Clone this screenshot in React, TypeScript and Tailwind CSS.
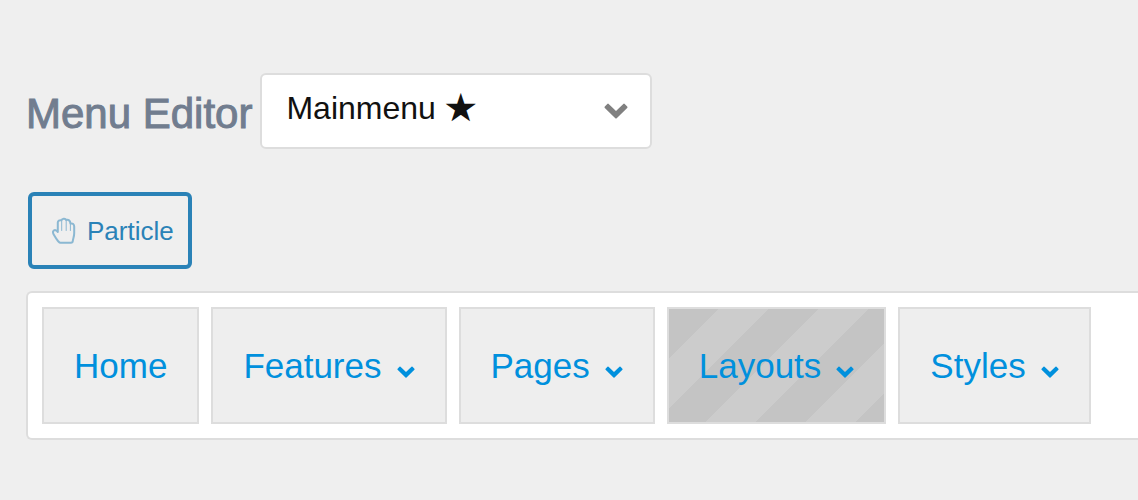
import React from "react";

type MenuItem = { label: string; hasChildren?: boolean; dragging?: boolean };

const items: MenuItem[] = [
  { label: "Home" },
  { label: "Features", hasChildren: true },
  { label: "Pages", hasChildren: true },
  { label: "Layouts", hasChildren: true, dragging: true },
  { label: "Styles", hasChildren: true },
];

function Chevron({ className }: { className: string }) {
  return (
    <svg viewBox="0 0 24 16" className={className} aria-hidden="true">
      <path
        d="M3.3 0.9 L0.8 3.5 Q0.1 4.2 0.8 4.9 L11.3 15.3 Q12 15.9 12.7 15.3 L23.2 4.9 Q23.9 4.2 23.2 3.5 L20.7 0.9 Q20 0.2 19.3 0.9 L12 8 L4.7 0.9 Q4 0.2 3.3 0.9 Z"
        fill="currentColor"
      />
    </svg>
  );
}

function HandIcon() {
  return (
    <svg
      viewBox="0 0 24 27"
      className="h-[27px] w-6 opacity-50"
      fill="none"
      stroke="currentColor"
      strokeLinecap="round"
      strokeLinejoin="round"
      aria-hidden="true"
    >
      <path
        strokeWidth="2"
        d="M5.8 15 V5.6 C5.8 3.6 7.3 2.9 9.5 3.3 C10 1.6 13.4 1.2 14.2 3 C16.4 2.5 18.3 3.4 18.4 6.5 C20.8 6 22.2 7.2 22.2 9.5 V16 C22.2 20 21 21.5 20.8 24 C20.7 25.2 20 25.7 19 25.7 H8.5 C7.3 25.7 6.8 24.8 6 24 C4.6 22.4 3.4 20.4 2 18 C0.2 15.2 1 13 3 12.9 C4.5 12.9 5.2 14 5.8 15 Z"
      />
      <path strokeWidth="1" d="M9.7 3.5 V13.5 M14.2 3.5 V13.5 M18.4 7 V13.5" />
    </svg>
  );
}

export default function App() {
  return (
    <main className="min-h-screen bg-[#efefef] pt-[73px] pl-[26px] font-['Liberation_Sans',Arial,sans-serif]">
      <header className="flex items-center gap-2">
        <h1 className="pt-1.5 text-[42px] leading-[48px] whitespace-nowrap text-[#717d8f] [-webkit-text-stroke:1px_#717d8f]">
          <label htmlFor="menu-select">Menu Editor</label>
        </h1>
        <div className="relative w-[392px]">
          <select
            id="menu-select"
            className="h-[76px] w-full appearance-none rounded-md border-2 border-[#dddddd] bg-white pr-16 pb-1.5 pl-6 font-['Liberation_Sans','Noto_Sans_CJK_JP',sans-serif] text-[32px] text-[#111111]"
          >
            <option>Mainmenu ★</option>
          </select>
          <Chevron className="pointer-events-none absolute top-[30px] right-6 h-4 w-6 text-[#808080]" />
        </div>
      </header>

      <button
        type="button"
        className="mt-[43px] ml-0.5 flex h-[77px] items-center gap-[11px] rounded-md border-4 border-[#2a82b7] pr-3.5 pl-5 text-[26px] text-[#2a82b7]"
      >
        <HandIcon />
        <span className="pt-0.5">Particle</span>
      </button>

      <nav className="mt-[22px] rounded-l-md border-2 border-r-0 border-[#dddddd] bg-white p-3.5">
        <ul className="flex gap-3">
          {items.map((item) => (
            <li key={item.label}>
              <a
                href="#"
                className={
                  "flex h-[117px] items-center gap-[15px] border-2 border-[#dddddd] px-[30px] pt-0.5 text-[35px] text-[#0090dd] " +
                  (item.dragging
                    ? "bg-[linear-gradient(135deg,#c4c4c4_25%,#cccccc_25%,#cccccc_50%,#c4c4c4_50%,#c4c4c4_75%,#cccccc_75%)] bg-[length:100px_100px]"
                    : "bg-[#eeeeee]")
                }
              >
                {item.label}
                {item.hasChildren && <Chevron className="mt-2.5 h-3 w-[18px]" />}
              </a>
            </li>
          ))}
        </ul>
      </nav>
    </main>
  );
}
